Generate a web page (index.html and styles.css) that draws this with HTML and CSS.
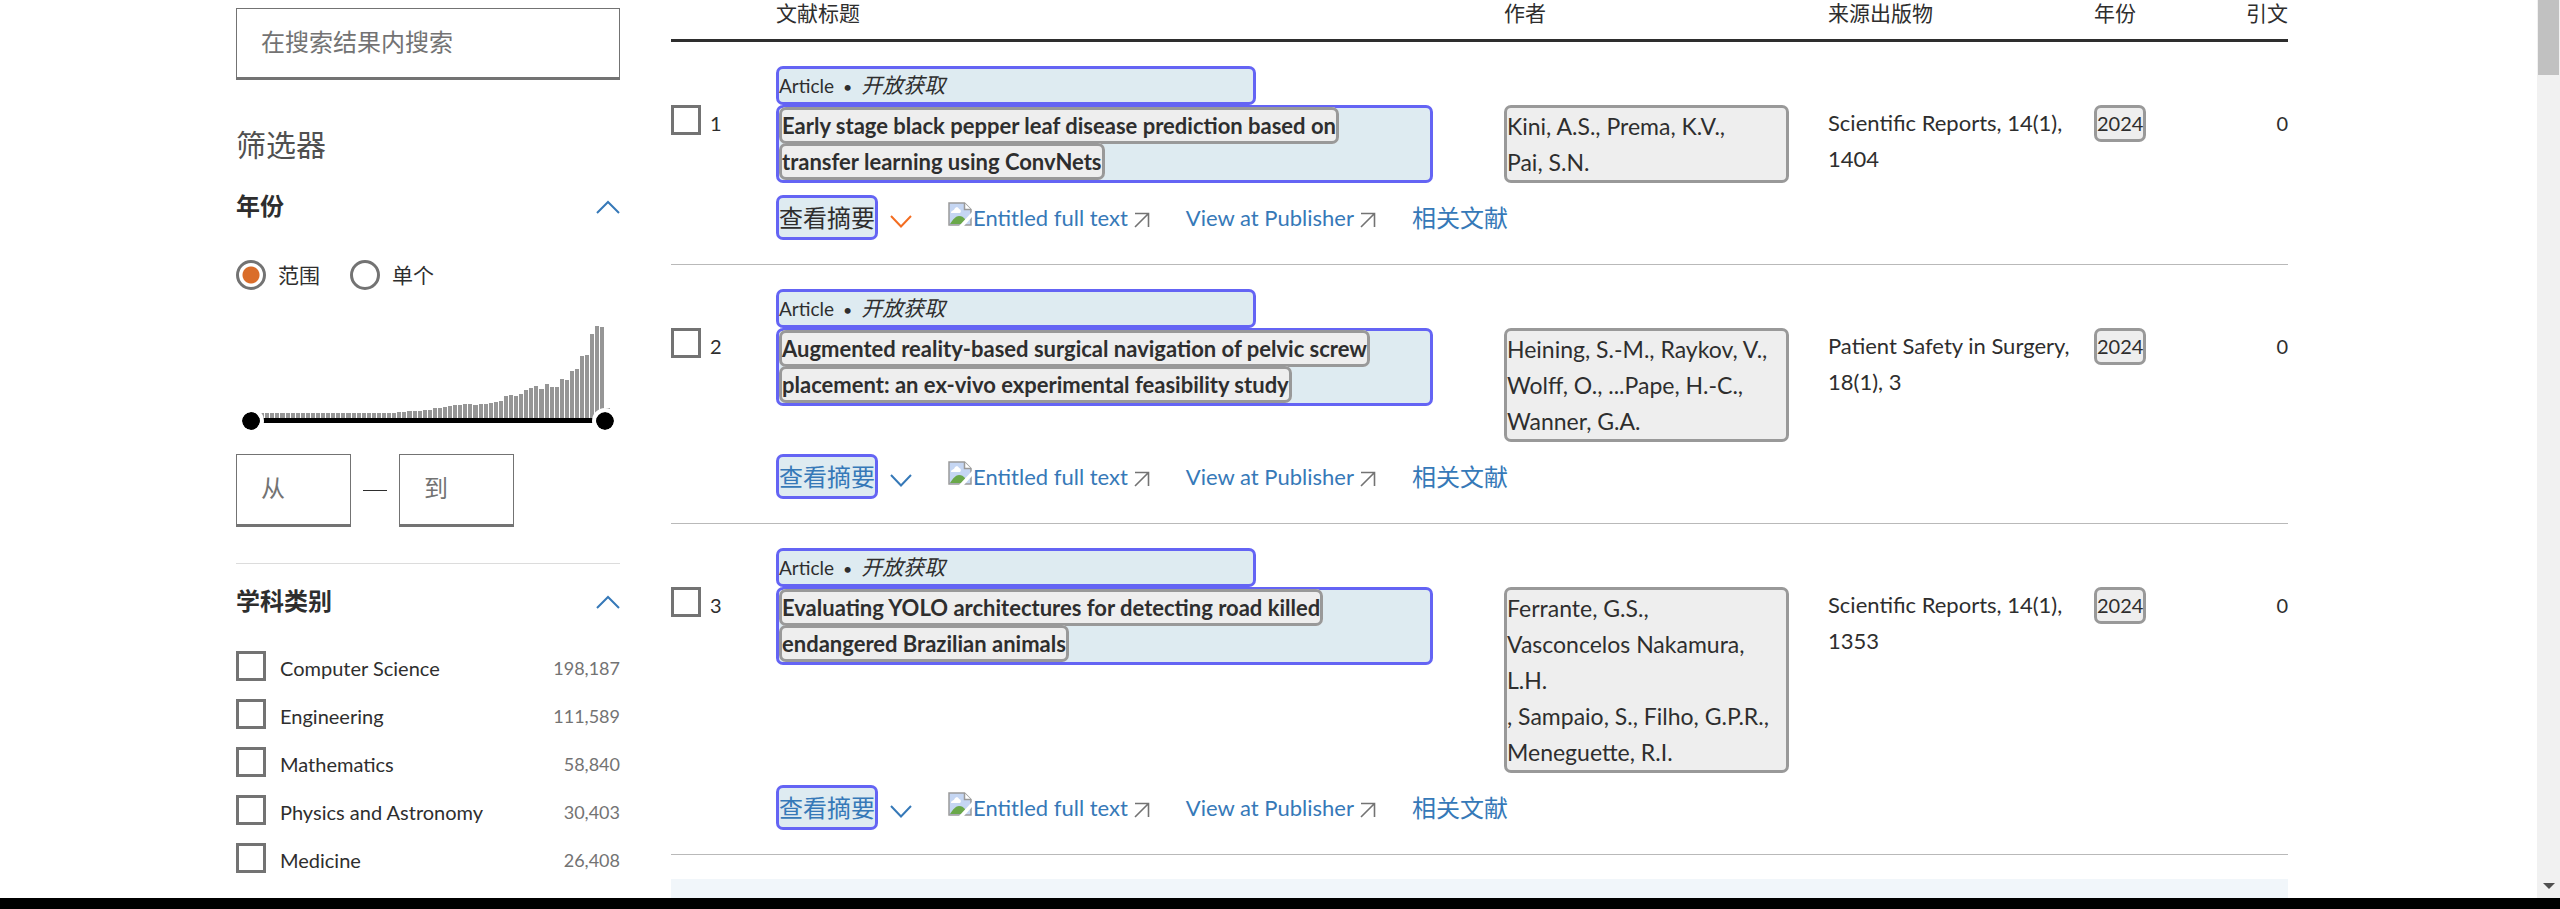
FILE: index.html
```html
<!DOCTYPE html>
<html lang="zh-CN">
<head>
<meta charset="utf-8">
<title>文献搜索结果</title>
<link rel="stylesheet" href="styles.css">
</head>
<body>
<svg class="sprite" aria-hidden="true">
  <symbol id="chevron-up" viewBox="0 0 24 14"><path d="M1 13 12 2l11 11" fill="none" stroke="currentColor" stroke-width="2"/></symbol>
  <symbol id="chevron-down" viewBox="0 0 22 14"><path d="M1 1l10 10.500L21 1" fill="none" stroke="currentColor" stroke-width="2"/></symbol>
  <symbol id="external" viewBox="0 0 16 16"><path d="M1 1.500h13.500V15M1 15 14.500 1.500" fill="none" stroke="currentColor" stroke-width="1.600"/></symbol>
  <symbol id="missing-image" viewBox="0 0 24 24">
    <path d="M1 1h15.500L23 7.500V23H1z" fill="#c5d6f3" stroke="#9a9a9a" stroke-width="1.500"/>
    <path d="M3 11c0-3 3-2 3.500-4 1-2.500 4-2 4.500 0 2 0 2.500 3 1 4z" fill="#fff"/>
    <path d="M2 22c3-5 6-8 9-8s4 1 6 3v5z" fill="#6aa84a"/>
    <path d="M16.500 1v6.500H23" fill="#fff" stroke="#9a9a9a" stroke-width="1.500"/>
    <path d="M11 24 24 10v5l-8 9z" fill="#fff"/>
  </symbol>
</svg>
<div class="viewport">
  <div class="page">
    <aside class="sidebar">
      <input class="field" type="text" aria-label="在搜索结果内搜索" placeholder="在搜索结果内搜索">
      <h2 class="filters-title">筛选器</h2>
      <section class="facet">
        <button class="facet-head" type="button">年份<svg class="chev-up"><use href="#chevron-up"/></svg></button>
        <div class="radios">
          <label class="radio-label"><input class="radio" type="radio" name="mode" checked>范围</label>
          <label class="radio-label"><input class="radio" type="radio" name="mode">单个</label>
        </div>
        <div class="histogram">
          <div class="bars" id="bars"></div>
          <div class="track"><span class="handle"></span><span class="handle"></span></div>
        </div>
        <div class="range">
          <input class="field year-field" type="text" aria-label="从" placeholder="从">
          <span class="dash"></span>
          <input class="field year-field" type="text" aria-label="到" placeholder="到">
        </div>
      </section>
      <section class="facet subjects">
        <button class="facet-head" type="button">学科类别<svg class="chev-up"><use href="#chevron-up"/></svg></button>
        <ul class="options">
          <li class="option"><input class="check" type="checkbox" id="s1"><label class="option-name" for="s1">Computer Science</label><span class="count">198,187</span></li>
          <li class="option"><input class="check" type="checkbox" id="s2"><label class="option-name" for="s2">Engineering</label><span class="count">111,589</span></li>
          <li class="option"><input class="check" type="checkbox" id="s3"><label class="option-name" for="s3">Mathematics</label><span class="count">58,840</span></li>
          <li class="option"><input class="check" type="checkbox" id="s4"><label class="option-name" for="s4">Physics and Astronomy</label><span class="count">30,403</span></li>
          <li class="option"><input class="check" type="checkbox" id="s5"><label class="option-name" for="s5">Medicine</label><span class="count">26,408</span></li>
        </ul>
        <a class="more" href="#">查看更多</a>
      </section>
    </aside>
    <main class="results">
      <table class="table">
        <colgroup><col class="c-num"><col><col class="c-authors"><col class="c-source"><col class="c-year"><col class="c-cites"></colgroup>
        <thead>
          <tr><th></th><th>文献标题</th><th>作者</th><th>来源出版物</th><th>年份</th><th class="right">引文</th></tr>
        </thead>
        <tbody>
          <tr class="meta-row"><td></td><td colspan="5"><div class="mark kind">Article<span class="dot">•</span><em>开放获取</em></div></td></tr>
          <tr class="main-row">
            <td><label class="pick"><input class="check" type="checkbox">1</label></td>
            <td><div class="mark title"><a class="hit" href="#">Early stage black pepper leaf disease prediction based on<br>transfer learning using ConvNets</a></div></td>
            <td><div class="box authors">Kini, A.S., Prema, K.V.,<br>Pai, S.N.</div></td>
            <td>Scientific Reports, 14(1),<br>1404</td>
            <td><span class="box year">2024</span></td>
            <td class="right cites">0</td>
          </tr>
          <tr class="action-row"><td></td><td colspan="5"><div class="actions">
            <button class="mark abstract visited" type="button">查看摘要</button><svg class="chev-down hot"><use href="#chevron-down"/></svg>
            <a class="link full" href="#"><svg class="missing"><use href="#missing-image"/></svg>Entitled full text<svg class="ext"><use href="#external"/></svg></a>
            <a class="link pub" href="#">View at Publisher<svg class="ext"><use href="#external"/></svg></a>
            <a class="link" href="#">相关文献</a>
          </div></td></tr>
        </tbody>
        <tbody>
          <tr class="meta-row"><td></td><td colspan="5"><div class="mark kind">Article<span class="dot">•</span><em>开放获取</em></div></td></tr>
          <tr class="main-row">
            <td><label class="pick"><input class="check" type="checkbox">2</label></td>
            <td><div class="mark title"><a class="hit" href="#">Augmented reality-based surgical navigation of pelvic screw<br>placement: an ex-vivo experimental feasibility study</a></div></td>
            <td><div class="box authors">Heining, S.-M., Raykov, V.,<br>Wolff, O., ...Pape, H.-C.,<br>Wanner, G.A.</div></td>
            <td>Patient Safety in Surgery,<br>18(1), 3</td>
            <td><span class="box year">2024</span></td>
            <td class="right cites">0</td>
          </tr>
          <tr class="action-row"><td></td><td colspan="5"><div class="actions">
            <button class="mark abstract" type="button">查看摘要</button><svg class="chev-down"><use href="#chevron-down"/></svg>
            <a class="link full" href="#"><svg class="missing"><use href="#missing-image"/></svg>Entitled full text<svg class="ext"><use href="#external"/></svg></a>
            <a class="link pub" href="#">View at Publisher<svg class="ext"><use href="#external"/></svg></a>
            <a class="link" href="#">相关文献</a>
          </div></td></tr>
        </tbody>
        <tbody>
          <tr class="meta-row"><td></td><td colspan="5"><div class="mark kind">Article<span class="dot">•</span><em>开放获取</em></div></td></tr>
          <tr class="main-row">
            <td><label class="pick"><input class="check" type="checkbox">3</label></td>
            <td><div class="mark title"><a class="hit" href="#">Evaluating YOLO architectures for detecting road killed<br>endangered Brazilian animals</a></div></td>
            <td><div class="box authors">Ferrante, G.S.,<br>Vasconcelos Nakamura,<br>L.H.<br>, Sampaio, S., Filho, G.P.R.,<br>Meneguette, R.I.</div></td>
            <td>Scientific Reports, 14(1),<br>1353</td>
            <td><span class="box year">2024</span></td>
            <td class="right cites">0</td>
          </tr>
          <tr class="action-row"><td></td><td colspan="5"><div class="actions">
            <button class="mark abstract" type="button">查看摘要</button><svg class="chev-down"><use href="#chevron-down"/></svg>
            <a class="link full" href="#"><svg class="missing"><use href="#missing-image"/></svg>Entitled full text<svg class="ext"><use href="#external"/></svg></a>
            <a class="link pub" href="#">View at Publisher<svg class="ext"><use href="#external"/></svg></a>
            <a class="link" href="#">相关文献</a>
          </div></td></tr>
        </tbody>
      </table>
      <div class="panel"></div>
    </main>
  </div>
  <div class="scrollbar"><div class="thumb"></div><svg class="scroll-arrow" viewBox="0 0 12 8"><path d="M0 1h12L6 7z" fill="#505050"/></svg></div>
</div>
<div class="strip"></div>
<script src="chart.js"></script>
</body>
</html>
```
FILE: styles.css
```css
* { box-sizing: border-box; }
body {
  margin: 0;
  height: 100vh;
  overflow: hidden;
  display: flex;
  flex-direction: column;
  background: #fff;
  color: #2e2e2e;
  font: 22px/36px Lato, "Noto Sans CJK SC", sans-serif;
}
input, button { font-family: inherit; color: inherit; }
.sprite { display: none; }
.viewport { flex: 1; min-height: 0; display: flex; overflow: hidden; }
.page { flex: 1; min-width: 0; display: flex; gap: 51px; padding: 0 249px 0 236px; }
.strip { height: 11px; background: #000; }

.scrollbar { width: 23px; background: #f1f1f1; display: flex; flex-direction: column; justify-content: space-between; align-items: center; padding-bottom: 8px; }
.thumb { width: 21px; height: 75px; background: #c1c1c1; }
.scroll-arrow { width: 12px; height: 8px; }

/* Sidebar */
.sidebar { width: 384px; flex: none; padding-top: 8px; }
.field {
  display: block;
  width: 100%;
  height: 72px;
  padding: 0 24px 4px;
  border: 1px solid #737373;
  border-bottom-width: 3px;
  border-radius: 0;
  background: #fff;
  font-size: 24px;
}
.field::placeholder { color: #737373; opacity: 1; }
.filters-title { margin: 44px 0 22px; font-size: 30px; line-height: 40px; font-weight: 400; color: #505050; }
.facet-head {
  display: flex;
  justify-content: space-between;
  align-items: center;
  width: 100%;
  height: 40px;
  padding: 0;
  border: 0;
  background: none;
  font-size: 24px;
  line-height: 40px;
  font-weight: 700;
}
.chev-up { width: 24px; height: 14px; margin-top: 2px; color: #3679b8; }
.radios { display: flex; gap: 24px; margin-top: 34px; }
.radio-label { display: flex; align-items: center; gap: 12px; height: 30px; width: 90px; font-size: 21px; line-height: 30px; }
.radio { appearance: none; flex: none; width: 30px; height: 30px; margin: 0; border: 3px solid #737373; border-radius: 50%; background: #fff; }
.radio:checked { background: radial-gradient(circle, #da6d2a 8px, #fff 9px); }
.histogram { height: 111px; margin-top: 35px; padding: 0 10px; }
.bars { display: flex; align-items: flex-end; gap: 1px; height: 93px; padding: 0 0 0 4px; }
.bar { flex: 1; background: #969696; }
.track { display: flex; justify-content: space-between; align-items: center; height: 5px; margin: 0 -8px; background: linear-gradient(#000, #000) center / 340px 5px no-repeat; }
.handle { width: 26px; height: 26px; border: 4px solid #fff; border-radius: 50%; background: #000; background-clip: padding-box; }
.range { display: flex; align-items: center; gap: 12px; margin-top: 18px; padding-bottom: 36px; border-bottom: 1px solid #dcdcdc; }
.year-field { width: 115px; height: 73px; }
.dash { width: 24px; height: 1px; background: #2e2e2e; }
.subjects { padding-top: 17px; }
.options { list-style: none; margin: 30px 0 0; padding: 0; display: flex; flex-direction: column; gap: 18px; }
.option { display: flex; align-items: center; gap: 14px; height: 30px; font-size: 20px; }
.check { appearance: none; flex: none; width: 30px; height: 30px; margin: 0; border: 3px solid #737373; background: #fff; }
.option-name { flex: 1; padding-top: 4px; }
.count { padding-top: 4px; font-size: 18px; color: #737373; }
.more { display: block; margin: 20px 0 0 44px; font-size: 21px; color: #3679b8; text-decoration: none; }

/* Results */
.results { flex: 1; min-width: 0; }
.table { width: 100%; table-layout: fixed; border-spacing: 0; }
.c-num { width: 105px; }
.c-authors { width: 324px; }
.c-source { width: 266px; }
.c-year { width: 74px; }
.c-cites { width: 120px; }
th { padding: 0 0 14px; text-align: left; font-size: 21px; line-height: 25px; font-weight: 400; border-bottom: 3px solid #2e2e2e; }
td { padding: 0; vertical-align: top; white-space: nowrap; line-height: 36px; }
.main-row td { line-height: 36px; }
.right { text-align: right; }
.mark { border: 3px solid #6464f4; border-radius: 7px; background: #deebf1; }
.box { border: 3px solid #999; border-radius: 7px; background: #eee; }
.meta-row td { padding-top: 24px; }
.kind { width: 480px; height: 39px; font-size: 19px; line-height: 31px; }
.kind em { font-size: 21px; }
.dot { margin: 0 9px; font-size: 16px; }
.title { width: 657px; font-weight: 700; }
.hit {
  padding: 2px 0;
  border: 3px solid #999;
  border-radius: 7px;
  background: #eee;
  color: #2e2e2e;
  text-decoration: none;
  -webkit-box-decoration-break: clone;
  box-decoration-break: clone;
}
.authors { width: 285px; font-size: 23px; }
.year { display: inline-block; height: 37px; font-size: 20px; line-height: 31px; }
.cites { font-size: 20px; }
.pick { display: flex; gap: 9px; font-size: 20px; }
.action-row td { padding: 12px 0 24px; border-bottom: 1px solid #b9b9b9; }
.actions { display: flex; align-items: center; height: 45px; }
.abstract { height: 45px; padding: 0; font-size: 24px; line-height: 39px; color: #3679b8; }
.abstract.visited { color: #2e2e2e; }
.chev-down { width: 22px; height: 14px; margin: 8px 36px 0 12px; color: #3679b8; }
.chev-down.hot { color: #f36d21; }
.link { display: flex; align-items: center; color: #3679b8; text-decoration: none; }
.link:last-child { font-size: 24px; }
.full, .pub { margin-right: 36px; }
.missing { width: 24px; height: 24px; margin: 0 1px 8px 0; }
.ext { width: 16px; height: 16px; margin: 4px 0 0 6px; color: #737373; }
.panel { height: 60px; margin-top: 24px; background: #f1f6fa; }
```
FILE: chart.js
```javascript
// Documents per year, as bar heights in pixels; years before these share the base height.
const recent = [6, 6, 7, 7, 7, 8, 8, 10, 10, 11, 12, 13, 13, 14, 14, 13, 14, 14, 15, 16, 17, 22, 23, 22, 24, 28, 30, 32, 29, 34, 31, 31, 39, 38, 47, 49, 62, 63, 84, 92, 91, 10];
const heights = Array(71 - recent.length).fill(5).concat(recent);
const bars = document.getElementById("bars");
for (const h of heights) {
  const bar = document.createElement("span");
  bar.className = "bar";
  bar.style.height = h + "px";
  bars.append(bar);
}
```
